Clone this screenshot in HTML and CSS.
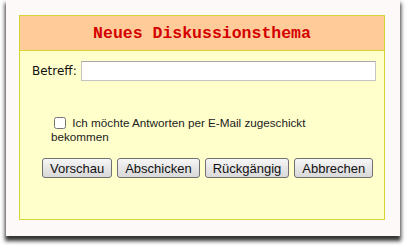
FILE: index.html
```html
<!DOCTYPE html>
<html lang="de">
<head>
    <meta charset="UTF-8">
    <meta name="viewport" content="width=device-width, initial-scale=1.0">
    <title>Neues Diskussionsthema</title>
    <link rel="stylesheet" href="styles.css">
</head>
<body>
    <div class="paper">
        <form class="panel">
            <div class="panel-head">
                <h1>Neues Diskussionsthema</h1>
            </div>
            <div class="panel-body">
                <div class="subject-row">
                    <label for="subject">Betreff:</label>
                    <input type="text" id="subject" class="subject-input">
                </div>
                <div class="notify">
                    <label><input type="checkbox" class="notify-check"> Ich möchte Antworten per E-Mail zugeschickt bekommen</label>
                </div>
                <div class="actions">
                    <button type="button" class="btn">Vorschau</button>
                    <button type="button" class="btn">Abschicken</button>
                    <button type="button" class="btn">Rückgängig</button>
                    <button type="button" class="btn">Abbrechen</button>
                </div>
            </div>
        </form>
    </div>
</body>
</html>
```

FILE: styles.css
```css
body {
    margin: 0;
    padding: 0;
    background: #fff;
    width: 410px;
    height: 245px;
    overflow: hidden;
}

.paper {
    margin: 0 10px 0 6px;
    height: 236px;
    padding: 15px 15px 0 13px;
    box-sizing: border-box;
    background: #fdf9f8;
    box-shadow: 0 4px 4px 1px rgba(0, 0, 0, 0.8);
}

.panel {
    margin: 0;
    border: 1px solid #d4d436;
    background: #ffffcc;
    height: 205px;
    box-sizing: border-box;
}

.panel-head {
    background: #ffcc99;
    border-bottom: 1px solid #d4d436;
    height: 34px;
    display: flex;
    align-items: center;
    justify-content: center;
}

.panel-head h1 {
    margin: 0;
    font-family: "Liberation Mono", "Courier New", monospace;
    font-size: 16.5px;
    font-weight: bold;
    color: #d40000;
}

.panel-body {
    padding: 10px 8px 0 12px;
}

.subject-row {
    display: flex;
    align-items: center;
    gap: 4px;
}

.subject-row label {
    font-family: "DejaVu Sans", Verdana, sans-serif;
    font-size: 12px;
    color: #111;
}

.subject-input {
    flex: 1;
    height: 20px;
    box-sizing: border-box;
    margin: 0;
    border: 1px solid #c4c4c4;
    border-top-color: #a9a9a9;
    background: #fff;
}

.notify {
    margin: 35px 0 0 19px;
    width: 265px;
    font-family: "Liberation Sans", Arial, sans-serif;
    font-size: 11.7px;
    line-height: 14px;
    color: #222;
}

.notify-check {
    width: 12px;
    height: 12px;
    margin: 0 3px 0 3px;
    vertical-align: -2px;
}

.actions {
    margin: 14px 0 0 10px;
    display: flex;
    gap: 5px;
}

.btn {
    height: 20px;
    padding: 0 7px;
    font-family: "Liberation Sans", Arial, sans-serif;
    font-size: 13px;
    color: #111;
    border: 1px solid #707070;
    border-radius: 3px;
    background: linear-gradient(#f7f7f7, #e6e6e6 50%, #d9d9d9);
    cursor: pointer;
}
```
